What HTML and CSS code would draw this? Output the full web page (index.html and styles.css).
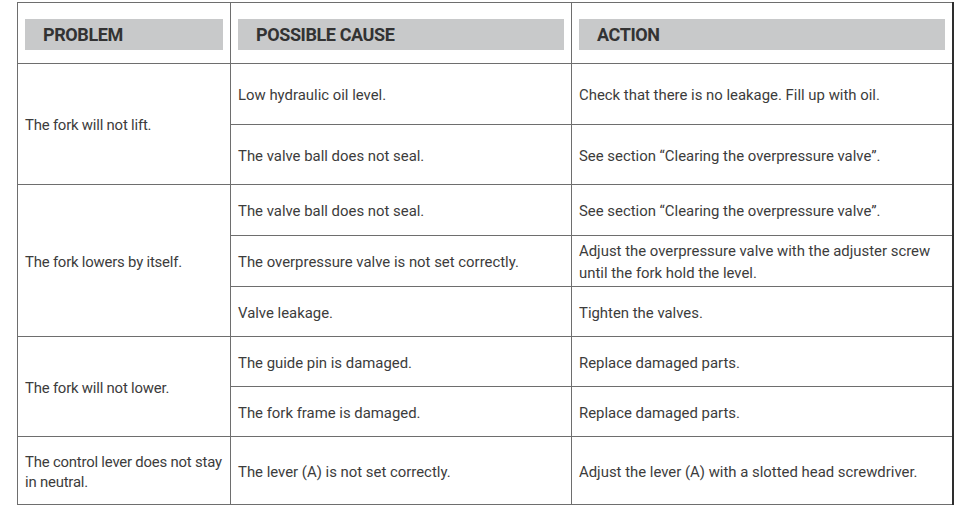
FILE: index.html
```html
<!DOCTYPE html>
<html>
<head>
<meta charset="utf-8">
<link rel="stylesheet" href="styles.css">
</head>
<body>
<table class="tbl">
  <colgroup>
    <col class="c1"><col class="c2"><col class="c3">
  </colgroup>
  <thead>
    <tr class="hrow">
      <th><div class="hbar">PROBLEM</div></th>
      <th><div class="hbar">POSSIBLE CAUSE</div></th>
      <th><div class="hbar">ACTION</div></th>
    </tr>
  </thead>
  <tbody>
    <tr class="r61">
      <td rowspan="2" class="prob">The fork will not lift.</td>
      <td>Low hydraulic oil level.</td>
      <td>Check that there is no leakage. Fill up with oil.</td>
    </tr>
    <tr class="r60">
      <td>The valve ball does not seal.</td>
      <td>See section “Clearing the overpressure valve”.</td>
    </tr>
    <tr class="r51">
      <td rowspan="3" class="prob">The fork lowers by itself.</td>
      <td>The valve ball does not seal.</td>
      <td>See section “Clearing the overpressure valve”.</td>
    </tr>
    <tr class="r51">
      <td>The overpressure valve is not set correctly.</td>
      <td>Adjust the overpressure valve with the adjuster screw until the fork hold the level.</td>
    </tr>
    <tr class="r50">
      <td>Valve leakage.</td>
      <td>Tighten the valves.</td>
    </tr>
    <tr class="r50">
      <td rowspan="2" class="prob">The fork will not lower.</td>
      <td>The guide pin is damaged.</td>
      <td>Replace damaged parts.</td>
    </tr>
    <tr class="r50">
      <td>The fork frame is damaged.</td>
      <td>Replace damaged parts.</td>
    </tr>
    <tr class="r68">
      <td class="prob">The control lever does not stay in neutral.</td>
      <td>The lever (A) is not set correctly.</td>
      <td>Adjust the lever (A) with a slotted head screwdriver.</td>
    </tr>
  </tbody>
</table>
</body>
</html>
```
FILE: styles.css
```css
html, body {
  margin: 0;
  padding: 0;
  background: #fff;
}
body {
  padding: 2px 0 0 17px;
}
.tbl {
  border-collapse: collapse;
  table-layout: fixed;
  width: 935px;
  font-family: Roboto, "Liberation Sans", sans-serif;
  font-size: 14.9px;
  color: #3c3c3c;
}
.c1 { width: 213px; }
.c2 { width: 341px; }
.c3 { width: 381px; }
.tbl th, .tbl td {
  border: 1.5px solid #6e6e6e;
  padding: 2px 20px 0 7px;
  text-align: left;
  vertical-align: middle;
  line-height: 22px;
}
.tbl td:last-child, .tbl th:last-child {
  border-right: 2px solid #2e2e2e;
}
.hrow th {
  height: 61px;
  padding: 2px 7px 0 7px;
  box-sizing: border-box;
}
.hbar {
  background: #c8c9ca;
  height: 31px;
  line-height: 32px;
  padding-left: 18px;
  font-weight: 700;
  font-size: 18px;
  color: #333;
  letter-spacing: -0.4px;
}
.r61 td { height: 61px; box-sizing: border-box; }
.r60 td { height: 60px; box-sizing: border-box; }
.r51 td { height: 51px; box-sizing: border-box; }
.r50 td { height: 50px; box-sizing: border-box; }
.r68 td { height: 68px; box-sizing: border-box; }
.tbl td.prob {
  line-height: 20px;
  padding-right: 1px;
  letter-spacing: -0.2px;
}
```
